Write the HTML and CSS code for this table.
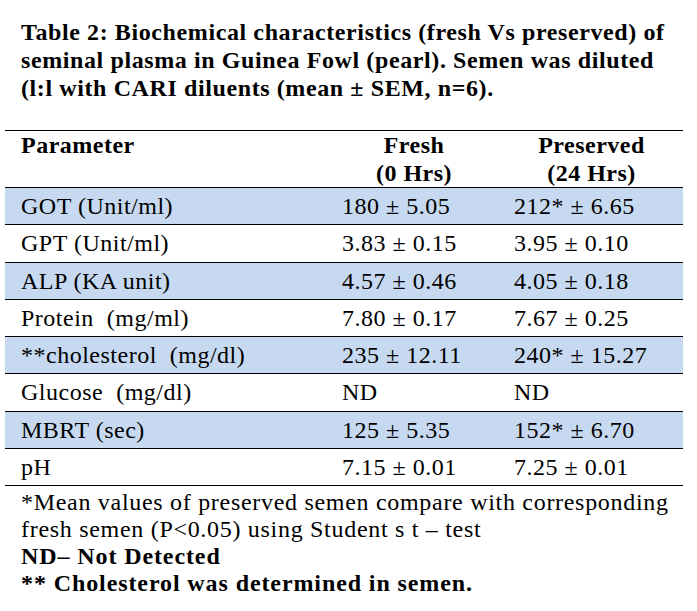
FILE: index.html
```html
<!DOCTYPE html>
<html lang="en">
<head>
<meta charset="utf-8">
<title>Table 2</title>
<link rel="stylesheet" href="styles.css">
</head>
<body>
<div class="page">
  <p class="title">Table 2: Biochemical characteristics (fresh Vs preserved) of<br>seminal plasma in Guinea Fowl (pearl). Semen was diluted<br>(l:l with CARI diluents (mean ± SEM, n=6).</p>
  <table class="data">
    <colgroup>
      <col class="c-param">
      <col class="c-fresh">
      <col class="c-pres">
    </colgroup>
    <thead>
      <tr>
        <th class="h-param">Parameter</th>
        <th class="h-num">Fresh<br>(0 Hrs)</th>
        <th class="h-num">Preserved<br>(24 Hrs)</th>
      </tr>
    </thead>
    <tbody>
      <tr class="shade"><td>GOT (Unit/ml)</td><td>180 ± 5.05</td><td>212* ± 6.65</td></tr>
      <tr><td>GPT (Unit/ml)</td><td>3.83 ± 0.15</td><td>3.95 ± 0.10</td></tr>
      <tr class="shade"><td>ALP (KA unit)</td><td>4.57 ± 0.46</td><td>4.05 ± 0.18</td></tr>
      <tr><td>Protein&nbsp; (mg/ml)</td><td>7.80 ± 0.17</td><td>7.67 ± 0.25</td></tr>
      <tr class="shade"><td>**cholesterol&nbsp; (mg/dl)</td><td>235 ± 12.11</td><td>240* ± 15.27</td></tr>
      <tr><td>Glucose&nbsp; (mg/dl)</td><td>ND</td><td>ND</td></tr>
      <tr class="shade"><td>MBRT (sec)</td><td>125 ± 5.35</td><td>152* ± 6.70</td></tr>
      <tr><td>pH</td><td>7.15 ± 0.01</td><td>7.25 ± 0.01</td></tr>
    </tbody>
  </table>
  <div class="notes">
    <p class="note">*Mean values of preserved semen compare with corresponding<br>fresh semen (P&lt;0.05) using Student s t – test</p>
    <p class="note strong">ND– Not Detected</p>
    <p class="note strong">** Cholesterol was determined in semen.</p>
  </div>
</div>
</body>
</html>
```

FILE: styles.css
```css
html, body {
  margin: 0;
  padding: 0;
  background: #ffffff;
}

body {
  font-family: "Liberation Serif", "Times New Roman", serif;
  color: #000000;
  font-size: 24px;
  letter-spacing: 0.5px;
}

.page {
  width: 678px;
  padding: 18px 0 0 5px;
}

.title {
  margin: 0 0 28px 0;
  padding-left: 16px;
  font-weight: bold;
  line-height: 28px;
  letter-spacing: 0.6px;
  font-size: 24px;
  white-space: nowrap;
}

.data {
  width: 678px;
  border-collapse: collapse;
  table-layout: fixed;
}

.c-param { width: 323px; }
.c-fresh { width: 172px; }
.c-pres { width: 183px; }

.data th {
  font-weight: bold;
  line-height: 28px;
  vertical-align: top;
  padding: 0;
  height: 56px;
  border-top: 1px solid #000;
  border-bottom: 1px solid #000;
}

.data th.h-param {
  text-align: left;
  padding-left: 16px;
}

.data th.h-num {
  text-align: center;
}

.data td {
  height: 36.25px;
  padding: 0 0 0 14px;
  line-height: 28px;
  border-bottom: 1px solid #000;
  vertical-align: middle;
  white-space: nowrap;
}

.data td:first-child {
  padding-left: 16px;
}

.data tr.shade td {
  background: #c6d9f1;
}

.notes {
  padding: 3px 0 0 16px;
}

.note {
  margin: 0;
  line-height: 27px;
  letter-spacing: 0.7px;
  white-space: nowrap;
}

.note.strong {
  font-weight: bold;
  letter-spacing: 0.9px;
}
```
